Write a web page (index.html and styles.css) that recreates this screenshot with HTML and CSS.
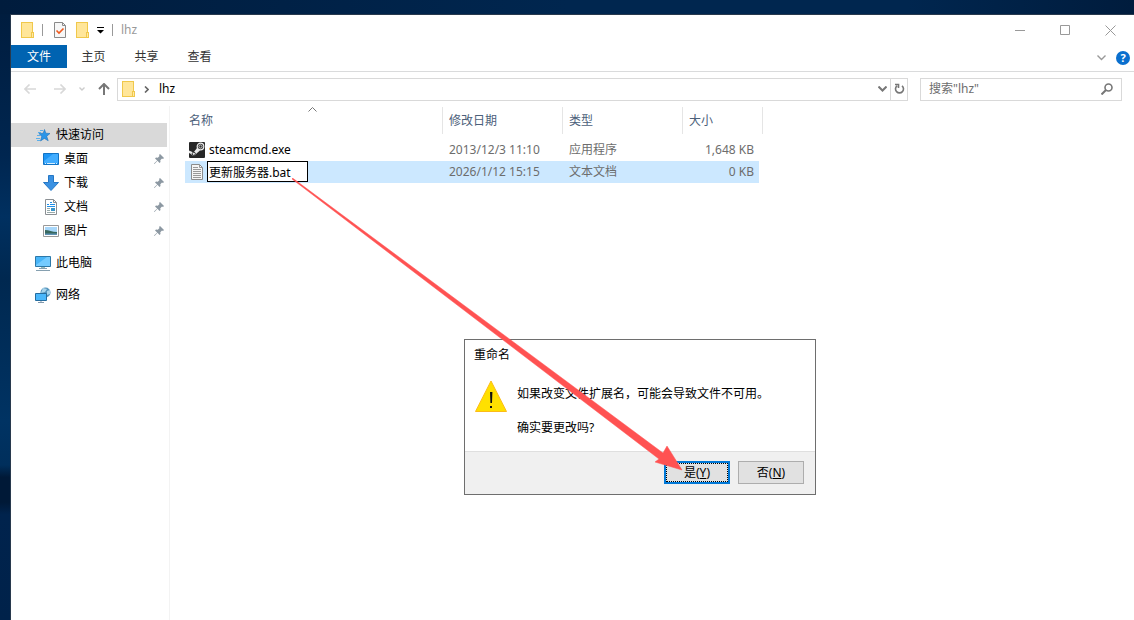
FILE: index.html
```html
<!DOCTYPE html>
<html lang="zh-CN">
<head>
    <meta charset="UTF-8">
    <meta name="viewport" content="width=device-width, initial-scale=1.0">
    <title>lhz</title>
    <link rel="stylesheet" href="styles.css">
</head>
<body>
    <svg class="symbols" aria-hidden="true">
        <symbol id="folder" viewBox="0 0 13 16">
            <path d="M0 0h12v10h1v6H0z" fill="#f0c84b"/>
            <path d="M1 1h10v9h-1v5H1z" fill="#ffe69a"/>
            <path d="M11 11h1v4h-1z" fill="#ffe9a6"/>
        </symbol>
        <symbol id="pin" viewBox="0 0 10 10">
            <path d="M6 0l4 4-1 1-1-.5L6.300 6.200 6.500 8l-1 1-2-2.200L.5 10 0 9.500l3.200-3L1 4.500l1-1 1.800.2L5.500 2 5 1z" fill="#8c98a2"/>
        </symbol>
    </svg>

    <div class="window">
        <header class="titlebar">
            <svg class="folder" width="13" height="16"><use href="#folder"/></svg>
            <span class="divider"></span>
            <button class="tool" aria-label="属性">
                <svg width="12" height="16" viewBox="0 0 12 16"><path d="M.5.500h8l3 3v12H.5z" fill="#f7f7f7" stroke="#8a8a8a"/><path d="M8.500.500v3h3" fill="none" stroke="#8a8a8a"/><path d="M2.500 8.500l2.500 2.500 4.500-4.500" fill="none" stroke="#f05a1e" stroke-width="1.600"/></svg>
            </button>
            <button class="tool new" aria-label="新建文件夹">
                <svg width="13" height="16"><use href="#folder"/></svg>
            </button>
            <button class="tool" aria-label="自定义快速访问工具栏">
                <svg width="7" height="7" viewBox="0 0 7 7"><path d="M0 0h7v1H0zM0 3h7L3.500 6.500z" fill="#000"/></svg>
            </button>
            <span class="divider"></span>
            <h1>lhz</h1>
            <div class="controls">
                <button aria-label="最小化"><svg width="11" height="11" viewBox="0 0 11 11"><path d="M0 5.500h10" stroke="#999"/></svg></button>
                <button aria-label="最大化"><svg width="11" height="11" viewBox="0 0 11 11"><path d="M.5.500h9v9h-9z" fill="none" stroke="#999"/></svg></button>
                <button aria-label="关闭"><svg width="11" height="11" viewBox="0 0 11 11"><path d="M.5.500l10 10M10.500.500l-10 10" stroke="#999"/></svg></button>
            </div>
        </header>

        <nav class="tabs">
            <button class="tab file">文件</button>
            <button class="tab">主页</button>
            <button class="tab">共享</button>
            <button class="tab">查看</button>
            <div class="help">
                <button aria-label="展开功能区"><svg width="9" height="6" viewBox="0 0 9 6"><path d="M.5.500l4 4 4-4" fill="none" stroke="#999" stroke-width="1.400"/></svg></button>
                <button class="question" aria-label="帮助">?</button>
            </div>
        </nav>

        <div class="address">
            <div class="arrows">
                <button aria-label="后退"><svg width="12" height="10" viewBox="0 0 12 10"><path d="M5.500.500L1 5l4.500 4.500M1 5h11" fill="none" stroke="#d8d8d8" stroke-width="1.600"/></svg></button>
                <button aria-label="前进"><svg width="12" height="10" viewBox="0 0 12 10"><path d="M6.500.500L11 5 6.500 9.500M11 5H0" fill="none" stroke="#d8d8d8" stroke-width="1.600"/></svg></button>
                <button class="recent" aria-label="最近浏览的位置"><svg width="6" height="4" viewBox="0 0 6 4"><path d="M.5.500L3 3 5.500.500" fill="none" stroke="#ccc" stroke-width="1.400"/></svg></button>
                <button aria-label="上移"><svg width="12" height="12" viewBox="0 0 12 12"><path d="M1 6l5-5 5 5M6 1v11" fill="none" stroke="#777" stroke-width="2"/></svg></button>
            </div>
            <div class="path">
                <svg width="13" height="16"><use href="#folder"/></svg>
                <svg width="5" height="7" viewBox="0 0 5 7"><path d="M1 .5l3 3-3 3" fill="none" stroke="#666" stroke-width="1.600"/></svg>
                <a href="#lhz">lhz</a>
                <button class="drop" aria-label="以前的位置"><svg width="9" height="6" viewBox="0 0 9 6"><path d="M.5.500l4 4 4-4" fill="none" stroke="#777" stroke-width="2"/></svg></button>
                <button class="refresh" aria-label="刷新"><svg width="11" height="12" viewBox="0 0 11 12"><path d="M8 2.800A4 4 0 1 1 3 2.800M1 1.500h3.500V5" fill="none" stroke="#777" stroke-width="1.600"/></svg></button>
            </div>
            <label class="search">
                <input type="text" aria-label="搜索" placeholder="搜索&quot;lhz&quot;">
                <svg width="12" height="12" viewBox="0 0 12 12"><circle cx="7.500" cy="4.500" r="3.500" fill="none" stroke="#777" stroke-width="1.600"/><path d="M5 7L.5 11.500" stroke="#777" stroke-width="2"/></svg>
            </label>
        </div>

        <div class="content">
            <aside class="sidebar">
                <a href="#quick" class="item active">
                    <svg width="16" height="16" viewBox="0 0 16 16"><path d="M9.500 2.500l1.300 3.700 4.200.3-3.300 2.700 1.500 4.500-3.900-2.300-3.800 2.600 1.200-4.500L4 6.500l4.200-.3z" fill="#2a95e8" stroke="#1b72bd" stroke-width=".6"/><path d="M5 3.500h3M3 5.500h3M2 8.500h3M1 11.500h4M2 13.500h3" stroke="#5caee8"/></svg>
                    <span>快速访问</span>
                </a>
                <a href="#desktop" class="item sub">
                    <svg width="16" height="12" viewBox="0 0 16 12"><path d="M.5.500h15v11H.5z" fill="#1e96f5" stroke="#1273c4"/><path d="M1 8L10 1h5v9H1z" fill="#42adff"/><path d="M2 10.500h1M4 10.500h8M13 10.500h1" stroke="#d8efff"/></svg>
                    <span>桌面</span>
                    <svg class="pin" width="10" height="10"><use href="#pin"/></svg>
                </a>
                <a href="#downloads" class="item sub">
                    <svg width="16" height="16" viewBox="0 0 16 16"><path d="M5.500.500h5v7h5L8 15.500.500 7.500h5z" fill="#3a91e2" stroke="#2577c5"/></svg>
                    <span>下载</span>
                    <svg class="pin" width="10" height="10"><use href="#pin"/></svg>
                </a>
                <a href="#documents" class="item sub">
                    <svg width="16" height="16" viewBox="0 0 16 16"><path d="M2.500.500h8l3 3v12h-11z" fill="#fff" stroke="#8b9094"/><path d="M10.500.500v3h3" fill="none" stroke="#8b9094"/><path d="M4 5.500h2M7 3.500h2M7 5.500h5M4 7.500h8" stroke="#1f8fe8"/><path d="M4 9.500h3M4 11.500h3M4 13.500h8" stroke="#9aa"/><path d="M8 9h4v3H8z" fill="#3a94c8"/></svg>
                    <span>文档</span>
                    <svg class="pin" width="10" height="10"><use href="#pin"/></svg>
                </a>
                <a href="#pictures" class="item sub">
                    <svg width="16" height="12" viewBox="0 0 16 12"><path d="M.5.500h15v11H.5z" fill="#fff" stroke="#999"/><path d="M2 2h12v8H2z" fill="#a8d7fa"/><path d="M2 5c4 0 7 2 12 2v3H2z" fill="#38685f"/><path d="M2 8.500h12V10H2z" fill="#5e92b5"/></svg>
                    <span>图片</span>
                    <svg class="pin" width="10" height="10"><use href="#pin"/></svg>
                </a>
                <a href="#pc" class="item root">
                    <svg width="16" height="16" viewBox="0 0 16 16"><path d="M.5 1.500h15v10H.5z" fill="#48b5f8" stroke="#2d78a8"/><path d="M1 10L12 2h3v9H1z" fill="#74cbff"/><path d="M6 12h4v1H6z" fill="#9bb"/><path d="M4 13.500h8M1 15.500h14" stroke="#86a0b0"/></svg>
                    <span>此电脑</span>
                </a>
                <a href="#network" class="item root">
                    <svg width="16" height="16" viewBox="0 0 16 16"><circle cx="10.500" cy="5.500" r="5" fill="#5595bd"/><path d="M8 1l4 1-2 3-4 1zM12 4l3-1v4l-3 1z" fill="#a8d4ec"/><path d="M.5 6.500h11v7H.5z" fill="#4ab7fb" stroke="#246c9f"/><path d="M3 15.500h6M6 14v1" stroke="#8299ad"/></svg>
                    <span>网络</span>
                </a>
            </aside>

            <main class="files">
                <table>
                    <colgroup>
                        <col class="col-name">
                        <col class="col-date">
                        <col class="col-type">
                        <col class="col-size">
                    </colgroup>
                    <thead>
                        <tr>
                            <th class="sorted">名称<svg width="9" height="5" viewBox="0 0 9 5"><path d="M.5 4.500l4-4 4 4" fill="none" stroke="#777"/></svg></th>
                            <th>修改日期</th>
                            <th>类型</th>
                            <th>大小</th>
                        </tr>
                    </thead>
                    <tbody>
                        <tr>
                            <td>
                                <div class="name">
                                    <svg width="16" height="16" viewBox="0 0 16 16"><rect width="16" height="16" rx="1" fill="#262626"/><path d="M0 8.500l4.500 2L8 6l3 2.500-3.500 3A3 3 0 0 1 2 12l-2-1z" fill="#e8e8e8"/><circle cx="11.500" cy="4.500" r="3.300" fill="#333" stroke="#eee" stroke-width="1.200"/><circle cx="11.500" cy="4.500" r="1.600" fill="none" stroke="#ccc"/><circle cx="4.800" cy="11.800" r="1.600" fill="none" stroke="#333"/></svg>
                                    <span>steamcmd.exe</span>
                                </div>
                            </td>
                            <td>2013/12/3 11:10</td>
                            <td>应用程序</td>
                            <td>1,648 KB</td>
                        </tr>
                        <tr class="selected">
                            <td>
                                <div class="name">
                                    <svg width="16" height="16" viewBox="0 0 16 16"><path d="M2.500.500h8l3 3v12h-11z" fill="#f5f5f5" stroke="#8c8c8c"/><path d="M10.500.500v3h3M4 3.500h5M4 5.500h8M4 7.500h8M4 9.500h8M4 11.500h8M4 13.500h8" fill="none" stroke="#999"/></svg>
                                    <input type="text" aria-label="文件名" value="更新服务器.bat">
                                </div>
                            </td>
                            <td>2026/1/12 15:15</td>
                            <td>文本文档</td>
                            <td>0 KB</td>
                        </tr>
                    </tbody>
                </table>
            </main>
        </div>
    </div>

    <div class="dialog" role="dialog" aria-labelledby="dialog-title">
        <h2 id="dialog-title">重命名</h2>
        <div class="message">
            <svg width="32" height="32" viewBox="0 0 32 32"><path d="M16 1l15.500 30.500H.5z" fill="#ffe000" stroke="#fcbc18"/><path d="M15 12h2.400l-.4 11h-1.600zM15 26h2v2h-2z" fill="#111"/></svg>
            <div>
                <p>如果改变文件扩展名，可能会导致文件不可用。</p>
                <p>确实要更改吗?</p>
            </div>
        </div>
        <div class="buttons">
            <button class="yes">是(<u>Y</u>)</button>
            <button>否(<u>N</u>)</button>
        </div>
    </div>

    <svg class="pointer" width="391" height="293" viewBox="0 0 391 293" aria-hidden="true">
        <path d="M.5 0L371 275 375 268 390 292 363 284 367 281 0 1z" fill="#ff5252" stroke="#ff5252" stroke-width=".5"/>
    </svg>
</body>
</html>
```

FILE: styles.css
```css
* {
    box-sizing: border-box;
}
body {
    margin: 0;
    min-height: 100vh;
    padding: 14px 0 0 10px;
    display: flex;
    background:
        linear-gradient(90deg, #001c3d, #00264f 50%, #00264f 80%, #001c3d) top / 100% 14px no-repeat,
        linear-gradient(#001c3d 0, #002650 25%, #003060 35%, #002850 45%, #003363 68%, #002f5c 75%, #001937 77%, #001937 81%, #00234d 83%, #00224a 100%);
    font-family: "Noto Sans", "Noto Sans CJK SC", sans-serif;
    font-size: 12px;
    line-height: 16px;
    color: #000;
    overflow: hidden;
}
button, input {
    font: inherit;
    color: inherit;
    margin: 0;
    padding: 0;
    border: none;
    background: none;
}
a {
    color: inherit;
    text-decoration: none;
}
svg {
    display: block;
    flex: none;
}
.symbols {
    position: absolute;
    width: 0;
    height: 0;
}
.window {
    flex: 1;
    display: flex;
    flex-direction: column;
    background: #fff;
    border: solid #28394d;
    border-width: 1px 0 0 1px;
}

/* title bar */
.titlebar {
    display: flex;
    align-items: center;
    height: 30px;
    padding-left: 10px;
    gap: 8px;
}
.divider {
    width: 1px;
    height: 12px;
    background: #999;
}
.titlebar .folder + .divider {
    margin-right: 3px;
}
.tool.new {
    margin-left: 2px;
}
.titlebar h1 {
    margin: 0;
    font-size: 12px;
    font-weight: normal;
    color: #999;
}
.controls {
    display: flex;
    margin-left: auto;
    padding-right: 1px;
}
.controls button {
    width: 45px;
    height: 30px;
    display: flex;
    align-items: center;
    justify-content: center;
}

/* ribbon tabs */
.tabs {
    display: flex;
    height: 27px;
    border-bottom: 1px solid #dadbdc;
}
.tab {
    width: 53px;
    height: 23px;
    padding-top: 1px;
    color: #333;
}
.tab.file {
    width: 56px;
    background: #0063b1;
    color: #fff;
}
.help {
    display: flex;
    align-items: center;
    gap: 10px;
    margin-left: auto;
    padding-right: 4px;
}
.question {
    width: 14px;
    height: 14px;
    border-radius: 50%;
    background: #0a6fce;
    color: #fff;
    font-weight: bold;
    font-size: 11px;
    line-height: 14px;
}

/* address bar */
.address {
    display: flex;
    align-items: center;
    height: 34px;
    padding-right: 12px;
}
.arrows {
    display: flex;
    align-items: center;
    gap: 18px;
    padding: 0 7px 0 13px;
}
.arrows .recent {
    margin: 0 -5px;
}
.path {
    flex: 1;
    display: flex;
    align-items: center;
    gap: 9px;
    height: 23px;
    padding-left: 4px;
    border: 1px solid #d9d9d9;
}
.path a {
    padding-left: 1px;
}
.drop {
    margin-left: auto;
    margin-right: -6px;
}
.refresh {
    width: 17px;
    height: 21px;
    padding-left: 3px;
    border-left: 1px solid #d9d9d9;
}
.search {
    width: 202px;
    height: 23px;
    margin-left: 12px;
    padding: 0 8px;
    display: flex;
    align-items: center;
    border: 1px solid #d9d9d9;
}
.search input {
    flex: 1;
    min-width: 0;
    outline: none;
}
.search input::placeholder {
    color: #6d6d6d;
}

/* navigation pane */
.content {
    flex: 1;
    display: flex;
}
.sidebar {
    width: 159px;
    padding: 17px 2px 0 0;
    border-right: 1px solid #f3f3f3;
}
.item {
    display: flex;
    align-items: center;
    gap: 5px;
    height: 24px;
    padding-left: 24px;
}
.item.active {
    background: #d9d9d9;
}
.item.sub {
    padding-left: 32px;
}
.item.root {
    margin-top: 8px;
}
.pin {
    margin-left: auto;
    margin-right: 3px;
}

/* file list */
.files {
    flex: 1;
    padding: 1px 0 0 15px;
}
table {
    table-layout: fixed;
    width: 578px;
    border-collapse: separate;
    border-spacing: 0;
}
.col-name {
    width: 258px;
}
.col-date, .col-type {
    width: 120px;
}
.col-size {
    width: 80px;
}
th {
    position: relative;
    height: 27px;
    padding: 0 0 0 6px;
    border-right: 1px solid #e5e5e5;
    font-weight: normal;
    text-align: left;
    color: #4c607a;
}
th:first-child {
    padding-left: 4px;
}
.sorted svg {
    position: absolute;
    top: 0;
    left: 123px;
}
thead::after {
    content: "";
    display: block;
    height: 5px;
}
td {
    height: 22px;
    padding: 0 0 0 6px;
    color: #6d6d6d;
}
td:first-child {
    padding-left: 4px;
}
td:last-child {
    padding-right: 5px;
    border-right: 4px solid #fff;
    text-align: right;
}
.selected td {
    background: #cce8ff;
}
.selected td:first-child {
    vertical-align: top;
}
.name {
    display: flex;
    align-items: center;
    gap: 4px;
    color: #000;
}
.name input {
    width: 101px;
    height: 21px;
    margin-left: -2px;
    padding-left: 1px;
    border: 1px solid #000;
    background: #fff;
}

/* rename dialog */
.dialog {
    position: absolute;
    left: 464px;
    top: 339px;
    width: 352px;
    background: #fff;
    border: 1px solid #6e6e6e;
}
.dialog h2 {
    margin: 0;
    padding: 7px 9px 0;
    font-size: 12px;
    font-weight: normal;
}
.message {
    display: flex;
    gap: 10px;
    padding: 17px 10px 15px;
}
.message p {
    margin: 6px 0 18px;
}
.message p + p {
    margin: 0;
}
.buttons {
    display: flex;
    justify-content: flex-end;
    gap: 8px;
    padding: 9px 11px 10px;
    background: #f0f0f0;
    border-top: 1px solid #dfdfdf;
}
.buttons button {
    width: 66px;
    height: 23px;
    border: 1px solid #adadad;
    background: #e1e1e1;
}
.buttons .yes {
    border: 2px solid #0078d7;
    outline: 1px dotted #000;
    outline-offset: -3px;
}
.pointer {
    position: absolute;
    left: 292px;
    top: 178px;
    pointer-events: none;
}
```
